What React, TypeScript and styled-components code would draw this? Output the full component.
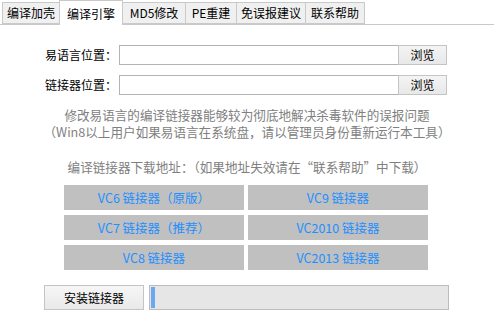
import React from 'react';
import styled, { createGlobalStyle } from 'styled-components';

const GlobalStyle = createGlobalStyle`
    html, body {
        margin: 0;
        padding: 0;
        background: #ffffff;
    }
    body {
        font-family: "Microsoft YaHei", "Noto Sans CJK SC", "Noto Sans", sans-serif;
        font-size: 12px;
        color: #000;
    }
`;

const Window = styled.div`
    width: 494px;
    height: 322px;
    background: #fff;
    overflow: hidden;
`;

//頁籤列
const TabBar = styled.div`
    display: flex;
    align-items: flex-end;
    height: 24px;
    padding-left: 2px;
    border-bottom: 1px solid #c9c9c9;
`;

const Tab = styled.div<{ $active?: boolean; $w: number }>`
    box-sizing: border-box;
    width: ${(p) => p.$w}px;
    height: ${(p) => (p.$active ? 25 : 22)}px;
    margin-bottom: ${(p) => (p.$active ? -1 : 0)}px;
    margin-left: -1px;
    border: 1px solid #c9c9c9;
    border-bottom: ${(p) => (p.$active ? 'none' : '1px solid #c9c9c9')};
    background: ${(p) => (p.$active ? '#ffffff' : '#f0f0f0')};
    display: flex;
    align-items: center;
    justify-content: center;
    line-height: 20px;
    padding-top: ${(p) => (p.$active ? 2 : 0)}px;
    white-space: nowrap;
    &:first-child {
        margin-left: 0;
    }
`;

const Main = styled.div`
    display: flex;
    flex-direction: column;
    align-items: center;
    padding-top: 20px;
`;

const Form = styled.div`
    display: flex;
    flex-direction: column;
    gap: 10px;
    margin-left: 45px;
    align-self: flex-start;
`;

const Row = styled.div`
    display: flex;
    align-items: center;
    height: 20px;
`;

const Label = styled.label`
    width: 68px;
    margin-right: 6px;
    text-align: right;
    white-space: nowrap;
    line-height: 20px;
`;

const PathInput = styled.input`
    box-sizing: border-box;
    width: 280px;
    height: 20px;
    margin: 0;
    border: 1px solid #b3b3b3;
    padding: 0 3px;
    font: inherit;
    outline: none;
`;

const Browse = styled.button`
    box-sizing: border-box;
    width: 49px;
    height: 20px;
    margin: 0 0 0 -1px;
    padding: 0;
    border: 1px solid #c4c4c4;
    background: linear-gradient(#f4f4f4, #e8e8e8);
    font: inherit;
    line-height: 18px;
    color: #000;
`;

const Info = styled.div`
    margin-top: 11px;
    color: #808080;
    font-size: 12.6px;
    line-height: 17px;
    text-align: center;
    white-space: nowrap;
`;

const Hint = styled(Info)`
    margin-top: 18px;
`;

const LinkGrid = styled.div`
    display: grid;
    grid-template-columns: 180px 180px;
    grid-auto-rows: 25px;
    column-gap: 4px;
    row-gap: 5px;
    margin-top: 10px;
    margin-left: -2px;
`;

const LinkButton = styled.button`
    margin: 0;
    padding: 0;
    border: none;
    background: #c0c0c0;
    color: #1e8fff;
    font: inherit;
    font-size: 12.5px;
    line-height: 25px;
    white-space: nowrap;
`;

const Bottom = styled.div`
    display: flex;
    gap: 5px;
    margin-top: 15px;
    margin-left: -1px;
`;

const Install = styled.button`
    box-sizing: border-box;
    width: 100px;
    height: 25px;
    margin: 0;
    padding: 0;
    border: 1px solid #c4c4c4;
    background: linear-gradient(#f6f6f6, #e9e9e9);
    font: inherit;
    color: #000;
`;

const Progress = styled.div`
    box-sizing: border-box;
    width: 300px;
    height: 25px;
    border: 1px solid #bcbcbc;
    background: #e6e6e6;
    padding: 1px;
    display: flex;
`;

const Chunk = styled.div`
    background: #6aa9f2;
    height: 100%;
`;

const tabs = [
    { text: '编译加壳', w: 58 },
    { text: '编译引擎', w: 64, active: true },
    { text: 'MD5修改', w: 64 },
    { text: 'PE重建', w: 52 },
    { text: '免误报建议', w: 70 },
    { text: '联系帮助', w: 60 },
];

const links = [
    'VC6 链接器（原版）',
    'VC9 链接器',
    'VC7 链接器（推荐）',
    'VC2010 链接器',
    'VC8 链接器',
    'VC2013 链接器',
];

const App = () => {
    const progress = 4;
    return (
        <Window>
            <GlobalStyle />
            <TabBar>
                {tabs.map((t) => (
                    <Tab key={t.text} $w={t.w} $active={t.active}>
                        {t.text}
                    </Tab>
                ))}
            </TabBar>
            <Main>
                <Form>
                    <Row>
                        <Label>易语言位置：</Label>
                        <PathInput type="text" />
                        <Browse>浏览</Browse>
                    </Row>
                    <Row>
                        <Label>链接器位置：</Label>
                        <PathInput type="text" />
                        <Browse>浏览</Browse>
                    </Row>
                </Form>
                <Info>
                    修改易语言的编译链接器能够较为彻底地解决杀毒软件的误报问题
                    <br />
                    （Win8以上用户如果易语言在系统盘，请以管理员身份重新运行本工具）
                </Info>
                <Hint>编译链接器下载地址：（如果地址失效请在“联系帮助”中下载）</Hint>
                <LinkGrid>
                    {links.map((l) => (
                        <LinkButton key={l}>{l}</LinkButton>
                    ))}
                </LinkGrid>
                <Bottom>
                    <Install>安装链接器</Install>
                    <Progress>
                        <Chunk style={{ width: progress }} />
                    </Progress>
                </Bottom>
            </Main>
        </Window>
    );
};

export default App;
